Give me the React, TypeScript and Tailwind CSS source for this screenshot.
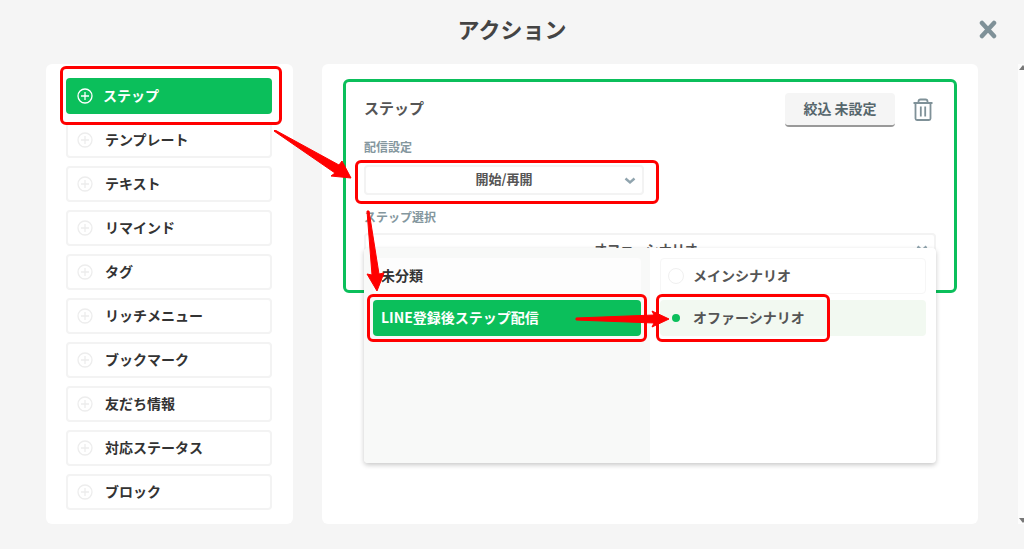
import type { ReactNode } from "react";

const actions = [
  "ステップ",
  "テンプレート",
  "テキスト",
  "リマインド",
  "タグ",
  "リッチメニュー",
  "ブックマーク",
  "友だち情報",
  "対応ステータス",
  "ブロック",
];

const scenarios = ["メインシナリオ", "オファーシナリオ"];

const PlusCircle = () => (
  <svg className="mt-[3px]" width="16" height="16" viewBox="0 0 16 16" fill="none" stroke="currentColor" strokeWidth="1.3" aria-hidden="true">
    <circle cx="8" cy="8" r="7" />
    <path d="M8 4v8M4 8h8" />
  </svg>
);

const Chevron = () => (
  <svg
    className="pointer-events-none absolute right-2 top-3 text-[#90a4ae]"
    width="12"
    height="8"
    viewBox="0 0 12 8"
    fill="none"
    stroke="currentColor"
    strokeWidth="2.4"
    aria-hidden="true"
  >
    <path d="M1.5 1.5 6 5.5l4.500-4" />
  </svg>
);

const TrashIcon = () => (
  <svg width="20" height="24" viewBox="0 0 20 24" fill="none" stroke="currentColor" strokeWidth="1.8" aria-hidden="true">
    <path d="M.5 5h19M5.500 4.500V3.500q0-2 2-2h5q2 0 2 2v1" />
    <path d="M2.500 5v15.500q0 1.500 1.500 1.500h12q1.500 0 1.500-1.500V5M7.800 8.500v10M12.200 8.500v10" />
  </svg>
);

// red marker frame drawn over a control
const Marker = ({ className }: { className: string }) => (
  <span className={`pointer-events-none absolute z-20 rounded-md border-3 border-[#ff0000] ${className}`} />
);

const Field = ({ id, label, children }: { id: string; label: string; children: ReactNode }) => (
  <div>
    <label htmlFor={id} className="block text-xs font-bold leading-5 text-[#84979e]">
      {label}
    </label>
    {children}
  </div>
);

const Sidebar = () => (
  <aside className="relative w-[247px] shrink-0 rounded-md bg-white py-[14px] pl-5 pr-[21px]">
    <ul className="flex flex-col gap-2">
      {actions.map((name, i) => (
        <li key={name} className="relative">
          {i === 0 ? (
            <button
              type="button"
              className="flex h-9 w-full items-center gap-[10px] rounded bg-[#0bbf5b] px-[11px] pb-[3px] text-sm font-bold text-white"
            >
              <PlusCircle />
              {name}
            </button>
          ) : (
            <button
              type="button"
              className="flex h-9 w-full items-center gap-3 rounded border-2 border-[#f3f3f3] px-[9px] pb-[3px] text-sm font-bold text-[#333]"
            >
              <span className="text-[#ededed]">
                <PlusCircle />
              </span>
              {name}
            </button>
          )}
          {i === 0 && <Marker className="-bottom-[11px] -left-[6px] -right-[10px] -top-3" />}
        </li>
      ))}
    </ul>
    <svg className="pointer-events-none absolute left-[228px] top-[66px] z-30" width="80" height="54" viewBox="0 0 80 54" fill="#ff0000" aria-hidden="true">
      <path d="M0 1 1 0 65 35 68 31 77 48 57 46 61 43Z" stroke="#ff0000" />
    </svg>
  </aside>
);

const ScenarioMenu = () => (
  <div className="absolute inset-x-0 top-[15px] z-10 flex h-[215px] rounded bg-white shadow-[0_2px_5px_rgba(0,0,0,0.22)]">
    <div className="flex w-1/2 flex-col gap-[6px] rounded-l bg-[#f8f9f8] px-[9px] py-[10px]">
      <button type="button" className="h-9 rounded bg-[#fdfdfd] px-2 pb-[3px] text-left text-sm font-bold text-[#333]">
        未分類
      </button>
      <div className="relative">
        <button type="button" className="h-9 w-full rounded bg-[#0bbf5b] px-2 pb-[3px] text-left text-sm font-bold text-white">
          LINE登録後ステップ配信
        </button>
        <Marker className="-inset-x-[6px] -inset-y-[6px]" />
        <svg className="pointer-events-none absolute -right-[29px] top-[10px] z-30" width="95" height="18" viewBox="0 0 95 18" fill="#ff0000" aria-hidden="true">
          <path d="M1 8 79 5 77 1 94 9 77 17 79 13 1 10Z" stroke="#ff0000" />
        </svg>
      </div>
    </div>
    <div className="flex w-1/2 flex-col gap-[6px] px-[10px] py-[10px]">
      {scenarios.map((name, i) => (
        <div key={name} className="relative">
          <label
            className={
              i === 1
                ? "flex h-9 items-center gap-[9px] rounded bg-[#f2f9f1] px-2 pb-[3px] text-sm font-bold text-[#555]"
                : "flex h-9 items-center gap-[9px] rounded border border-[#f6f6f6] px-[7px] pb-[3px] text-sm font-bold text-[#555]"
            }
          >
            <input
              type="radio"
              name="scenario"
              defaultChecked={i === 1}
              className="mt-[3px] h-4 w-4 appearance-none rounded-full border border-[#f0f0f0] checked:border-4 checked:border-[#f2f9f1] checked:bg-[#0bbf5b]"
            />
            {name}
          </label>
          {i === 1 && <Marker className="-inset-y-[6px] -left-1 w-[174px]" />}
        </div>
      ))}
    </div>
  </div>
);

const StepCard = () => (
  <section className="rounded-md border-3 border-[#0bbf5b] px-[18px] pb-[21px] pt-[11px]">
    <div className="flex items-center justify-between">
      <h2 className="pb-1 text-[15px] font-bold leading-6 text-[#555]">ステップ</h2>
      <div className="flex items-center gap-[18px] pr-[3px]">
        <button
          type="button"
          className="h-[34px] w-[110px] rounded border-b-2 border-[#999] bg-[#f5f5f5] pb-[2px] text-sm font-bold text-[#56666c]"
        >
          絞込 未設定
        </button>
        <button type="button" aria-label="削除" className="text-[#7f9198]">
          <TrashIcon />
        </button>
      </div>
    </div>
    <div className="mt-[10px] flex flex-col gap-3">
      <Field id="delivery" label="配信設定">
        <div className="relative mt-2 w-[280px]">
          <select
            id="delivery"
            className="block h-[30px] w-full appearance-none rounded border-2 border-[#f3f3f3] bg-white pb-[2px] text-[13px] font-bold text-[#555] [text-align-last:center]"
          >
            <option>開始/再開</option>
          </select>
          <Chevron />
          <Marker className="-bottom-[9px] -left-[9px] -right-[15px] -top-[5px]" />
          <svg className="pointer-events-none absolute left-0 top-[45px] z-30" width="22" height="84" viewBox="0 0 22 84" fill="#ff0000" aria-hidden="true">
            <path d="M3 1 5 1 15 64 20 63 13 81 3 64 8 65Z" stroke="#ff0000" />
          </svg>
        </div>
      </Field>
      <Field id="step" label="ステップ選択">
        <div className="relative mt-[6px]">
          <select
            id="step"
            className="block h-9 w-full appearance-none rounded border-2 border-[#f3f3f3] bg-white pb-[5px] pr-2 text-[13px] font-bold text-[#555] [text-align-last:center]"
          >
            <option>オファーシナリオ</option>
          </select>
          <Chevron />
          <ScenarioMenu />
        </div>
      </Field>
    </div>
  </section>
);

const App = () => {
  return (
    <div className="min-h-screen bg-white pb-px font-['Noto_Sans_CJK_JP',sans-serif]">
      <div className="flex min-h-[calc(100vh-1px)] flex-col bg-[#f5f5f5] pb-[25px]">
        <header className="relative flex h-[64px] items-center justify-center pb-2">
          <h1 className="text-[22px] font-bold leading-8 text-[#444]">アクション</h1>
          <button type="button" aria-label="閉じる" className="absolute right-[27px] top-5 text-[#78909c]">
            <svg width="18" height="20" viewBox="0 0 18 20" fill="none" stroke="#7f9198" strokeWidth="4.5" strokeLinecap="round" aria-hidden="true">
              <path d="M3 3 15 16M15 3 3 16" />
            </svg>
          </button>
        </header>
        <main className="flex flex-1 gap-[29px] pl-[46px]">
          <Sidebar />
          <div className="min-w-0 flex-1 rounded-md bg-white px-[21px] pt-[15px]">
            <StepCard />
          </div>
          <div className="ml-[11px] flex w-[6px] flex-col items-start justify-between overflow-hidden bg-[#fcfcfc] text-[#777]">
            <svg width="6" height="6" viewBox="0 0 6 6" fill="currentColor" aria-hidden="true">
              <path d="M1 6 5 1 9 6Z" />
            </svg>
            <svg width="6" height="6" viewBox="0 0 6 6" fill="currentColor" aria-hidden="true">
              <path d="M1 0h8L5 5Z" />
            </svg>
          </div>
        </main>
      </div>
    </div>
  );
};

export default App;
